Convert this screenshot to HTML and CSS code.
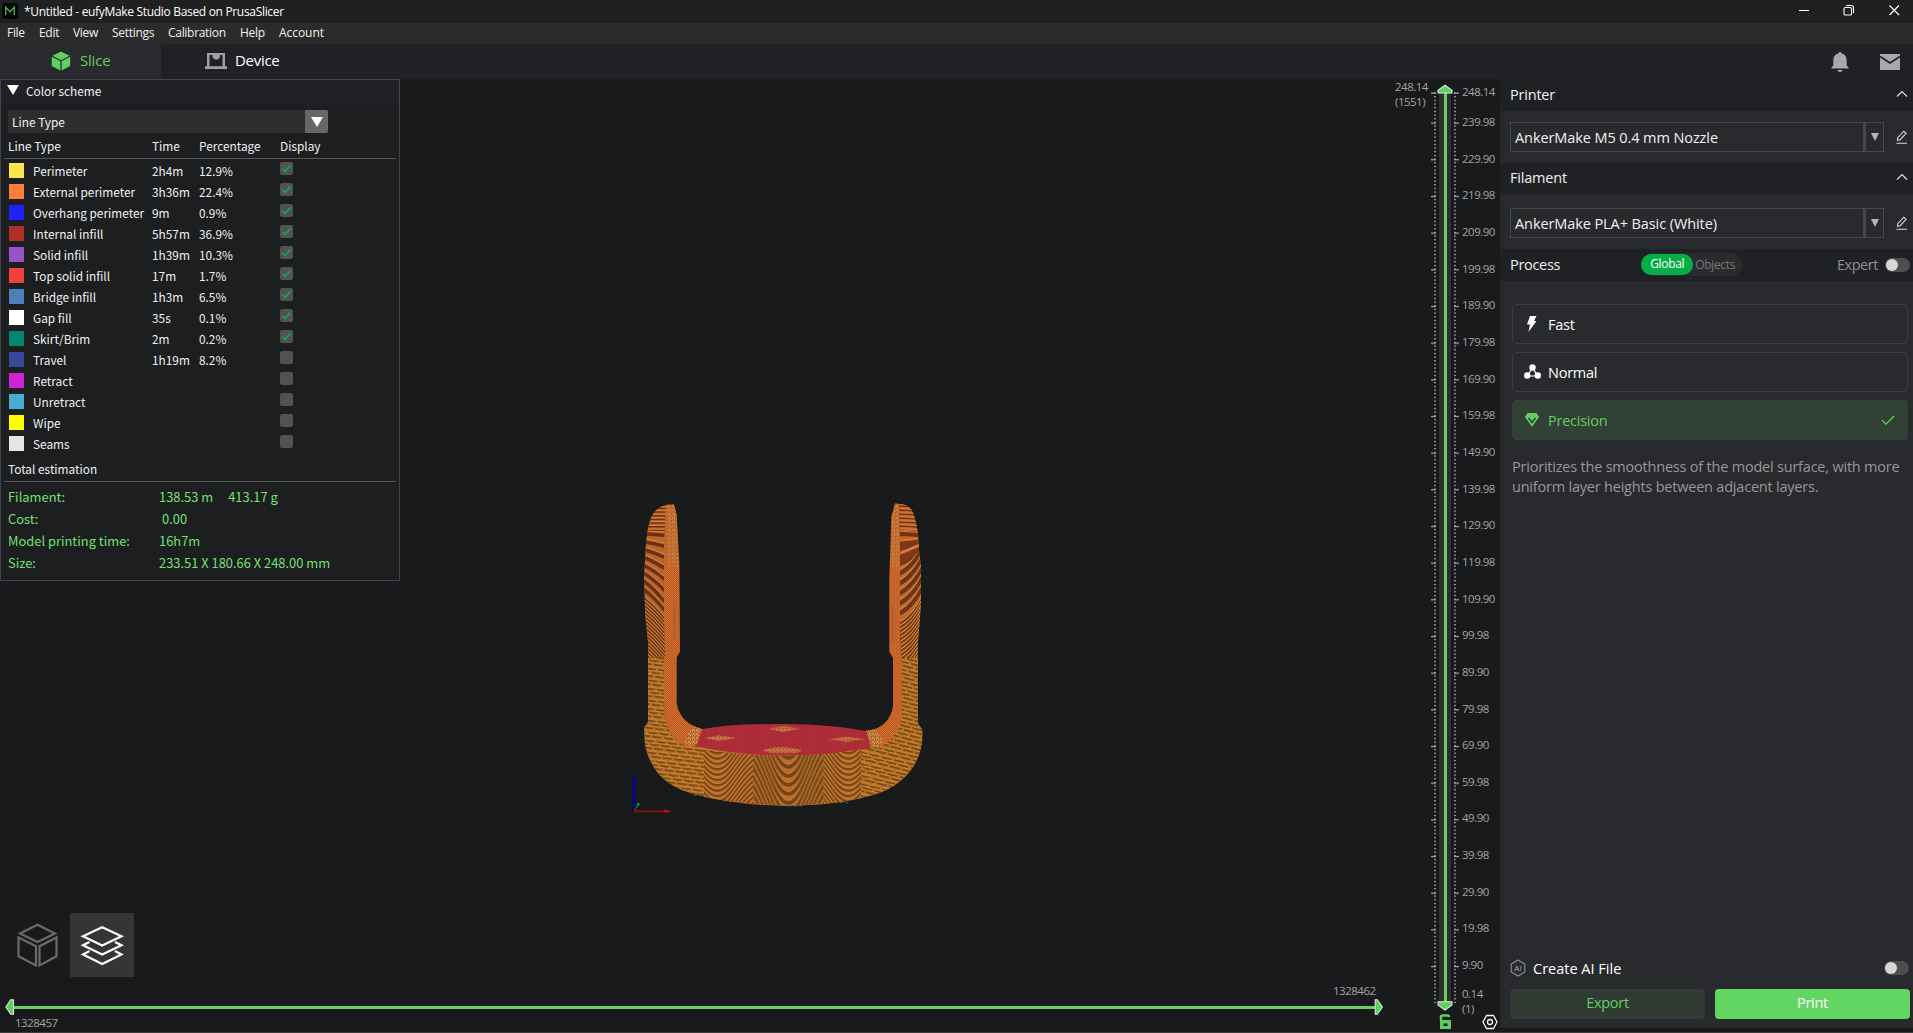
FILE: index.html
```html
<!DOCTYPE html>
<html lang="en">
<head>
<meta charset="utf-8">
<title>*Untitled - eufyMake Studio Based on PrusaSlicer</title>
<link rel="stylesheet" href="styles.css">
</head>
<body>
<header class="titlebar">
  <svg class="app-icon" width="16" height="16" viewBox="0 0 16 16"><rect width="16" height="16" rx="3" fill="#030604"/><path d="M3.700 12V4.300L8 8.700l4.300-4.400V12" fill="none" stroke="#4fb557" stroke-width="1.300"/></svg>
  <span class="title">*Untitled - eufyMake Studio Based on PrusaSlicer</span>
  <svg class="win-btns" width="114" height="23" viewBox="0 0 114 23" fill="none" stroke="#fff" stroke-width="1.100"><path d="M4 10.500h10M94.500 5.500l9.500 9.500M104 5.500l-9.500 9.500"/><rect x="49" y="7.500" width="7.500" height="7.500" rx="1.300"/><path d="M51 5.500h5.500a2 2 0 0 1 2 2V13"/></svg>
</header>
<nav class="menubar"><span class="m-file">File</span><span class="m-edit">Edit</span><span class="m-view">View</span><span class="m-set">Settings</span><span class="m-cal">Calibration</span><span class="m-help">Help</span><span>Account</span></nav>
<div class="tabbar">
  <div class="tab active">
    <svg width="20" height="20" viewBox="0 0 20 20"><path d="M10 .5 18.500 4.800 10 9.200 1.500 4.800z" fill="#62d060"/><path d="M.8 5.800 9.400 10.200V19.600L.8 15zM19.200 5.800 10.600 10.200V19.600L19.200 15z" fill="#62d060"/></svg>
    <span>Slice</span>
  </div>
  <div class="tab device">
    <svg width="22" height="18" viewBox="0 0 22 18" fill="#9d9fa1"><path d="M2 1h18v2H2z"/><path d="M2 1h2.500v14H2zM17.500 1H20v14h-2.500zM0 14.300h22V17H0zM7.500 1.500h7.500v3.700L12.700 7.500H9.800L7.500 5.200z"/></svg>
    <span>Device</span>
  </div>
  <svg class="bell" width="18" height="20" viewBox="0 0 18 20" fill="#a7a8a9"><path d="M9 0c1 0 1.500.6 1.500 1.600C14 2.300 15.700 5 15.700 8v5.500L17.500 15.500v1H.5v-1L2.300 13.500V8c0-3 1.700-5.700 5.200-6.400C7.500.6 8 0 9 0zM6.500 18h5c-.3 1.200-1.200 2-2.500 2s-2.200-.8-2.500-2z"/></svg>
  <svg class="mail" width="20" height="17" viewBox="0 0 20 17"><path d="M0 1h20v16H0z" fill="#a7a8a9"/><path d="M0 3.500 10 10l10-6.500" fill="none" stroke="#202124" stroke-width="1.800"/></svg>
</div>
<main>
  <section class="viewport">
    <svg class="model" width="320" height="340" viewBox="0 0 960 1020">
      <defs>
        <pattern id="inner" width="6" height="6" patternUnits="userSpaceOnUse"><path fill="#bb5a25" d="M0 0h6v6H0z"/><path fill="#d26e2b" d="M0 0h3v3H0zM3 3h3v3H3z"/></pattern>
        <pattern id="speck" width="12" height="12" patternUnits="userSpaceOnUse"><path fill="#bd7034" d="M0 0h12v12H0z"/><path fill="#d9ae62" d="M0 0h3v3H0zM6 3h3v3H6zM3 9h3v3H3z"/><path fill="#a8522c" d="M3 3h3v3H3zM9 6h3v3H9z"/></pattern>
        <pattern id="top" width="9" height="6" patternUnits="userSpaceOnUse"><path fill="#a92a37" d="M0 0h9v6H0z"/><path fill="#b8303b" d="M0 0h3v3H0zM6 3h3v3H6z"/></pattern>
        <clipPath id="bodyClip"><path d="M84 450V695L73 712Q70 780 95 820 125 885 220 912 350 947 500 947T760 915Q860 885 895 800 910 760 907 720L894 700V450H820V650Q805 715 740 724H248Q180 700 170 640V450z"/></clipPath>
        <clipPath id="armL"><path d="M150 42Q112 48 97 75 78 115 76 200L72 260 76 380 84 455V505H138L132 400V150L140 43z"/></clipPath>
        <clipPath id="armR"><path d="M838 41Q866 44 875 60 895 100 897 180L903 230V340L894 455V505H843L840 400V150z"/></clipPath>
        <clipPath id="midClip"><path d="M252 780 340 790Q490 804 640 790L723 778V924Q620 945 500 947 360 942 252 920z"/></clipPath>
        <clipPath id="midCore"><path d="M400 770H610V950H400z"/></clipPath>
      </defs>
      <g clip-path="url(#bodyClip)">
        <path fill="#b57227" d="M60 440H920V960H60z"/>
        <g id="wall"></g>
      </g>
      <path fill="url(#inner)" d="M132 500H168V640Q178 700 248 717L240 770H200Q140 745 134 670zM819 500H845V680Q835 745 780 770H755L740 724Q812 710 819 650z"/>
      <g clip-path="url(#armL)"><path fill="#bb642a" d="M60 30H180V520H60z"/><g id="bandsL"></g></g>
      <g clip-path="url(#armR)"><path fill="#c2662a" d="M820 30H920V520H820z"/><g id="bandsR"></g><path d="M840 160 898 150V185L840 224z" fill="#7d3a1b"/><path d="M840 190 898 166" stroke="#de7b36" stroke-width="8"/></g>
      <path fill="url(#inner)" d="M138 45 162 43 170 75 178 220 180 485 168 505 136 500 132 400V150zM826 40 838 42 840 150V480L843 505H819L808 485 808 260 814 80z"/>
      <path fill="url(#speck)" opacity=".6" d="M142 48 162 44 170 75 175 230H140zM824 42H838V230H812L816 80z"/>
      <path d="M163 335V450M819 348V455" stroke="#8d5b45" stroke-width="7" stroke-dasharray="3 3"/>
      <path fill="url(#top)" d="M248 717Q340 701 490 702T740 724L752 775Q640 799 490 797 340 795 225 768z"/>
      <path fill="url(#speck)" d="M445 716 490 708 540 716 490 726zM255 744 295 736 350 744 295 753zM627 748 680 740 735 748 680 756zM428 780Q480 762 545 780L530 790H450z" opacity=".8"/>
      <path fill="url(#speck)" d="M216 710 243 718 232 762 210 768 190 755zM738 722 765 718 790 750 775 775 755 768z"/>
      <g clip-path="url(#midClip)"><path fill="#bd6b26" d="M240 770H730V950H240z"/><g id="bandsSide"></g><g clip-path="url(#midCore)"><path fill="#b96b25" d="M385 770H625V950H385z"/><g id="bandsMid"></g></g></g>
      <path d="M222 916H262M505 948H545M660 938H690" stroke="#167b5c" stroke-width="3" stroke-dasharray="8 9"/>
      <path d="M42 857V962" stroke="#06077e" stroke-width="9"/><path d="M42 964H152" stroke="#8e0e0e" stroke-width="5"/><path d="M132 964h14" stroke="#b01010" stroke-width="8"/><path d="M44 960 55 943" stroke="#149c14" stroke-width="4" stroke-dasharray="5 3"/><circle cx="55" cy="943" r="4" fill="#18a01c"/>
    </svg>

    <aside class="legend">
      <div class="legend-head"><i class="tri"></i><span>Color scheme</span></div>
      <div class="combo"><span>Line Type</span><b><i class="tri"></i></b></div>
      <div class="row cols"><span>Line Type</span><span>Time</span><span>Percentage</span><span>Display</span></div>
      <div class="rows" id="rows"></div>
      <div class="total">Total estimation</div>
      <dl>
        <dt>Filament:</dt><dd>138.53 m<span class="grams">413.17 g</span></dd>
        <dt>Cost:</dt><dd class="cost">0.00</dd>
        <dt>Model printing time:</dt><dd>16h7m</dd>
        <dt>Size:</dt><dd>233.51 X 180.66 X 248.00 mm</dd>
      </dl>
    </aside>

    <div class="modes">
      <svg width="64" height="64" viewBox="0 0 64 64" fill="none" stroke="#6a6a6b" stroke-width="2.200"><path d="M31.500 11.800 49 20.500 31.500 29 14 20.500zM12.500 24.500 30 33.200V52.500L12.500 43.300zM50.500 24.500 33.500 33.200V52.500L50.500 43.300z"/></svg>
      <svg class="on" width="64" height="64" viewBox="0 0 64 64" fill="none" stroke="#fff" stroke-width="2.200"><path d="M32.200 14.200 51.500 23.300 32.200 32.500 13 23.300z"/><path d="M19.500 29 13 32.300 32.200 41.500 51.500 32.300 45 29M19.500 38 13 41.500 32.200 51 51.500 41.500 45 38"/></svg>
    </div>

    <div class="hslider">
      <span class="num end">1328462</span>
      <svg width="1382" height="16" viewBox="0 0 1382 16"><path d="M9 8.500H1371" stroke="#69ce67" stroke-width="3"/><path d="M9.500.8H6.800L1.800 8l5 7.200h2.700zM1371.200.8h2.200L1378.400 8l-5 7.200h-2.200z" fill="#5fce60" stroke="#d3edd1" stroke-width="1.100"/></svg>
      <span class="num start">1328457</span>
    </div>

    <div class="vslider">
      <div class="num current">248.14<br>(1551)</div>
      <svg width="32" height="950" viewBox="0 0 32 950">
        <defs><pattern id="minor" width="32" height="3.667" patternUnits="userSpaceOnUse" y="13.500"><path d="M4 0h2v1.200H4zM24 0h2v1.200h-2z" fill="#a5a5a5"/></pattern>
        <pattern id="major" width="32" height="36.670" patternUnits="userSpaceOnUse" y="43.500"><path d="M1 0h5v1.200H1zM24 0h5v1.200h-5z" fill="#a5a5a5"/></pattern></defs>
        <path fill="url(#minor)" d="M0 13H32V924H0z"/><path fill="url(#major)" d="M0 42H32V890H0z"/>
        <path fill="#a5a5a5" d="M1 13.500h5v1.200H1zM24 13.500h5v1.200h-5z"/>
        <path fill="#2e2e2e" d="M9 14H21V924H9z"/><path fill="#69ce67" d="M14 12h3V924h-3z"/>
        <path d="M8 14V11.200L15 6.200l7 5V14zM8 922.800V926l7 5 7-5v-3.200z" fill="#5fce60" stroke="#d3edd1" stroke-width="1.100"/>
        <path d="M11 942v-4q0-1.500 1.500-1.500h5q1.500 0 1.500 1.500" fill="none" stroke="#5fce60" stroke-width="2.400"/><path fill="#5fce60" d="M10 941H21V950H10z"/><path fill="#191a1b" d="M13.500 944.500h4v2.500h-4z"/>
      </svg>
      <div class="num marks" id="marks"></div>
    </div>
    <svg class="gear" width="16" height="16" viewBox="0 0 16 16" fill="none" stroke="#f2f2f2" stroke-width="1.300"><path d="M4.500 1.500h7L15 8l-3.500 6.500h-7L1 8z"/><circle cx="8" cy="8" r="2.500"/></svg>
  </section>

  <section class="side">
    <div class="head">Printer<svg class="chev" width="12" height="8" viewBox="0 0 12 8"><path d="M1 6.500 6 1.500l5 5" fill="none" stroke="#e6e6e6" stroke-width="1.100"/></svg></div>
    <div class="pick printer"><div class="select">AnkerMake M5 0.4 mm Nozzle<b></b></div><svg width="12" height="14" viewBox="0 0 12 14" fill="none" stroke="#dadada" stroke-width="1.100"><path d="M1.500 10.300 1.800 7.700 7.800 1.200 10 3.300 4.200 9.700zM.5 13.200h10.500"/></svg></div>
    <div class="head">Filament<svg class="chev" width="12" height="8" viewBox="0 0 12 8"><path d="M1 6.500 6 1.500l5 5" fill="none" stroke="#e6e6e6" stroke-width="1.100"/></svg></div>
    <div class="pick filament"><div class="select">AnkerMake PLA+ Basic (White)<b></b></div><svg width="12" height="14" viewBox="0 0 12 14" fill="none" stroke="#dadada" stroke-width="1.100"><path d="M1.500 10.300 1.800 7.700 7.800 1.200 10 3.300 4.200 9.700zM.5 13.200h10.500"/></svg></div>
    <div class="head process">Process<div class="scope"><b>Global</b><span>Objects</span></div><span class="expert">Expert</span><i class="toggle"></i></div>
    <div class="presets">
      <div class="preset"><svg width="18" height="18" viewBox="0 0 18 18"><path d="M7 1h6.500L11 6h2.500L5.500 17 7 9.500H4z" fill="#fff"/></svg>Fast</div>
      <div class="preset"><svg width="18" height="18" viewBox="0 0 18 18"><path d="M9.500 4.500 4.500 13h10z" fill="none" stroke="#fff" stroke-width="1.200"/><g fill="#fff"><circle cx="9.500" cy="4.500" r="3.200"/><circle cx="4.200" cy="12.500" r="3.200"/><circle cx="14.800" cy="12.500" r="3.200"/></g></svg>Normal</div>
      <div class="preset chosen"><svg width="18" height="18" viewBox="0 0 18 18"><path d="M4.500 2h9L16 6 9 15.800 2 6z" fill="#62d060"/><path d="M5.500 7 9 11.500 12.500 7" fill="none" stroke="#324135" stroke-width="1.500"/></svg>Precision<svg class="tick" width="14" height="11" viewBox="0 0 14 11"><path d="M1 5.200 5 9.200 13 1" fill="none" stroke="#62d060" stroke-width="1.300"/></svg></div>
    </div>
    <p class="desc">Prioritizes the smoothness of the model surface, with more<br>uniform layer heights between adjacent layers.</p>
    <div class="ai"><svg width="16" height="18" viewBox="0 0 16 18"><path d="M8 1 14.800 5v8L8 17 1.200 13V5z" fill="none" stroke="#8e8f91" stroke-width="1.100"/><text x="8" y="12" text-anchor="middle" class="ai-text">AI</text></svg>Create AI File<i class="toggle"></i></div>
    <div class="actions"><button class="export">Export</button><button class="print">Print</button></div>
  </section>
</main>
<footer></footer>
<script src="scene.js"></script>
</body>
</html>
```
FILE: styles.css
```css
*{box-sizing:border-box}
body{margin:0;width:1913px;height:1033px;overflow:hidden;display:flex;flex-direction:column;background:#191a1b;color:#f0f0f0;font-family:"Open Sans","Noto Sans",sans-serif;font-size:14.5px;letter-spacing:-.2px}
svg{display:block;flex:none}
i{font-style:normal}
.titlebar{height:23px;background:#202020;display:flex;align-items:center;padding-left:2px;font-size:12px;letter-spacing:-.32px;color:#fff}
.app-icon{margin-top:-1px}
.title{margin-left:6px}
.win-btns{margin-left:auto;margin-right:4px}
.menubar{height:20px;background:#2b2b2b;display:flex;align-items:center;padding:0 0 1px 7px;font-size:12px;letter-spacing:-.3px}
.menubar span{white-space:nowrap}
.menubar span:last-child{letter-spacing:-.05px}
.m-file{width:32px}.m-edit{width:34px}.m-view{width:39px}.m-set{width:56px}.m-cal{width:72px}.m-help{width:39px}
.tabbar{height:36px;background:#202124;display:flex;align-items:center;border-top:1px solid #25262a}
.tab{display:flex;align-items:center;height:35px;width:161px;font-size:15px;padding:0 0 2px 51px;gap:9px}
.tab span{margin-top:-2px}
.tab.active{background:#292a2d;color:#62d060}
.tab.device{padding-left:44px;gap:8px;color:#fff;letter-spacing:-.28px}
.bell{margin-left:auto}
.mail{margin:0 13px 0 31px}
main{display:flex;height:949px}
.viewport{width:1500px;position:relative;background:#191a1b}
.model{position:absolute;left:620px;top:411px}
.legend{position:absolute;left:0;top:0;width:400px;height:502px;border:1px solid #41444d;background:#1d1e20;font-family:"Noto Sans CJK SC",sans-serif;font-size:11.85px;letter-spacing:0;line-height:21px;padding:0 3px}
.legend-head{height:24px;margin:0 -3px;background:#202125;display:flex;align-items:center;padding:0 0 3px 6px;gap:7px}
.tri{width:0;height:0;border:6px solid transparent;border-top:10px solid #fff;border-bottom:0;margin-top:-1px}
.combo{margin:6px 0 0 4px;width:320px;height:23px;background:#2e2e2e;display:flex;padding-left:4px;line-height:24px;border-radius:1px}
.combo b{margin-left:auto;width:23px;background:#676767;display:grid;place-items:center;border-radius:0 2px 2px 0}
.combo .tri{margin:0}
.row{display:grid;grid-template-columns:25px 119px 47px 81px 1fr;height:21px;padding-left:4px}
.cols{grid-template-columns:144px 47px 81px 1fr;height:26px;line-height:25px;border-bottom:1px solid #56575a}
.rows{padding-top:1px}
.row i{width:15px;height:15px;margin:3px 0 0 1px}
.row u{width:13px;height:13px;background:#525252;border-radius:2px;margin-top:2px}
.rows span{white-space:nowrap}
.total{height:31px;line-height:36px;padding-left:4px;border-bottom:1px solid #56575a;margin-top:-3px}
dl{margin:4px 0 0 4px;display:grid;grid-template-columns:151px 1fr;font-size:12.9px;line-height:22px;color:#73e072}
dd{margin:0}.cost{padding-left:3px}.grams{margin-left:15px}
.modes{position:absolute;left:6px;top:834px;display:flex}
.modes .on{background:#353536}
.num{font-size:11.5px;letter-spacing:-.5px;color:#a3a3a3;line-height:15px}
.hslider{position:absolute;left:4px;top:904px;width:1382px}
.hslider .num{display:block;height:16px}
.hslider .end{margin-left:1329px}
.start{margin:0 0 0 11px}
.vslider{position:absolute;right:0;top:0;width:105px;display:flex}
.current{width:35px;white-space:nowrap}
.marks{padding:5px 0 0;white-space:nowrap}
.marks span{display:block;height:36.670px}
.marks span:first-child{height:30px}
.marks .last{height:15px;margin-top:-8px}
.gear{position:absolute;left:1482px;top:935px}
.side{width:413px;background:#292a2d;display:flex;flex-direction:column}
.head{height:32px;background:#202124;display:flex;align-items:center;padding:0 5px 2px 10px}
.chev{margin-left:auto}
.pick{display:flex;align-items:center;padding-left:10px;gap:12px}
.printer{height:51px;padding-top:1px}.filament{height:55px;padding-top:3px}
.select{width:374px;height:30px;border:1px solid #47484a;display:flex;align-items:center;padding-left:4px;letter-spacing:-.09px;white-space:nowrap}
.select b{margin-left:auto;width:20px;height:28px;border-left:3px solid #47484a;display:grid;place-items:center}
.select b:before{content:"";border:4px solid transparent;border-top:8px solid #b5b5b5;border-bottom:0}
.process{padding:0 3px 1px 10px;letter-spacing:-.3px}
.scope{margin-left:81px;display:flex;align-items:center;height:23px;background:#2b2b2e;border-radius:12px;width:101px;font-size:12px;letter-spacing:-.33px;color:#77787b}
.scope b{font-weight:400;color:#fff;background:#06ad46;width:52px;height:21px;line-height:20px;border-radius:11px;text-align:center;margin-right:2px}
.expert{margin-left:auto;margin-right:7px;color:#8f9092;letter-spacing:-.45px}
.toggle{width:25px;height:14px;border-radius:7px;background:#4e4e50;display:block}
.toggle:before{content:"";display:block;width:12px;height:12px;border-radius:50%;background:#d8d8d8;margin:1px 0 0 1px}
.presets{display:flex;flex-direction:column;gap:8px;padding:23px 5px 0 12px}
.preset{height:40px;border:1px solid #3c3d40;border-radius:4px;display:flex;align-items:center;padding:0 12px 0 10px;gap:7px;color:#fff;letter-spacing:-.25px}
.chosen{background:#324135;border-color:#324135;color:#62d060}
.tick{margin-left:auto}
.desc{margin:17px 0 0 12px;line-height:20px;color:#97989b;white-space:nowrap;letter-spacing:-.21px}
.ai{margin-top:auto;height:28px;display:flex;align-items:center;padding:0 4px 0 10px;gap:7px;letter-spacing:0;color:#fff}
.ai .toggle{margin-left:auto}
.ai-text{font:8px "Open Sans",sans-serif;fill:#aaa}
.actions{display:flex;gap:10px;padding:7px 3px 9px 10px}
.actions button{flex:1;height:30px;border:0;border-radius:4px;font:14.5px/28px "Open Sans",sans-serif;padding:0 0 2px;letter-spacing:-.3px}
.export{background:#303932;color:#62d060}
.print{background:#62d662;color:#fff}
footer{height:5px;background:#191a1b;border-bottom:1px solid #3c3c3d}
```
FILE: scene.js
```js
// Legend rows: colour, name, time, share, shown
const lines = [
  ['#ffe54d', 'Perimeter', '2h4m', '12.9%', 1],
  ['#ff7d38', 'External perimeter', '3h36m', '22.4%', 1],
  ['#1f1fff', 'Overhang perimeter', '9m', '0.9%', 1],
  ['#b03029', 'Internal infill', '5h57m', '36.9%', 1],
  ['#9654cc', 'Solid infill', '1h39m', '10.3%', 1],
  ['#f04040', 'Top solid infill', '17m', '1.7%', 1],
  ['#4d80ba', 'Bridge infill', '1h3m', '6.5%', 1],
  ['#ffffff', 'Gap fill', '35s', '0.1%', 1],
  ['#00876e', 'Skirt/Brim', '2m', '0.2%', 1],
  ['#38489b', 'Travel', '1h19m', '8.2%', 0],
  ['#cd22d6', 'Retract', '', '', 0],
  ['#49adcf', 'Unretract', '', '', 0],
  ['#ffff00', 'Wipe', '', '', 0],
  ['#e6e6e6', 'Seams', '', '', 0]
];
const check = '<svg width="13" height="13" viewBox="0 0 13 13"><path d="M2.500 6.800 5.200 9.300 10.500 3.500" fill="none" stroke="#12a850" stroke-width="1.700"/></svg>';
document.getElementById('rows').innerHTML = lines.map(([c, n, t, p, on]) =>
  `<div class="row"><i style="background:${c}"></i><span>${n}</span><span>${t}</span><span>${p}</span><u>${on ? check : ''}</u></div>`).join('');

// Layer heights beside the vertical slider
const heights = ['248.14'];
for (let i = 0; i < 24; i++) heights.push((240 - i * 10 - (i % 2 ? 0.1 : 0.02)).toFixed(2));
document.getElementById('marks').innerHTML = heights.map(h => `<span>${h}</span>`).join('') + '<span class="last">0.14<br>(1)</span>';

// Layer banding on the sliced model
const put = (id, s) => { document.getElementById(id).innerHTML = s; };
const band = (d, c, w, dash) => `<path d="${d}" fill="none" stroke="${c}" stroke-width="${w}"${dash ? ` stroke-dasharray="${dash}"` : ''}/>`;

let wall = '';
for (let y = 400, n = 0; y < 980; y += 12, n++) {
  const x = 40 + (n * 13) % 34;
  wall += band(`M${x} ${y}L400 ${y + 40}`, '#7d4a1e', 5, '27 7') + band(`M${x + 6} ${y - 6}L400 ${y + 34}`, '#cd8c31', 2.5, '24 10');
  wall += band(`M${560 + x} ${y - 50}L920 ${y + 25}`, '#7a481d', 5, '31 7') + band(`M${564 + x} ${y - 56}L920 ${y + 19}`, '#cf8b31', 2.5, '28 10');
}
put('wall', wall);

let left = '';
for (let y = 44; y < 520;) {
  const step = y > 125 && y < 320 ? 25 : 11;
  const k = Math.max(0, Math.min(58, (y - 120) * 0.35));
  const f = o => `M68 ${y + o - k * 0.2}Q100 ${y + o + k * 0.2} 138 ${y + o + k}`;
  left += band(f(0), '#6b3018', step * 0.42) + band(f(-step * 0.38), y > 260 ? '#bb8c33' : '#d98336', 3);
  y += step;
}
put('bandsL', left);

let right = '';
for (let y = 48; y < 580;) {
  const step = y > 120 && y < 400 ? 30 : 12;
  const k = y < 150 ? 5 : Math.max(-85, (150 - y) * 0.8);
  const f = o => `M836 ${y + o}Q880 ${y + o + k * 0.25} 908 ${y + o + k}`;
  right += band(f(0), '#6e3319', step * 0.42) + band(f(-step * 0.38), y > 220 ? '#c99536' : '#de7d36', 3);
  y += step;
}
put('bandsR', right);

const arcs = (cx, w, rise, step, start) => {
  let s = '';
  for (let y = start; y < 1250; y += step) {
    const f = o => `M${cx - w} ${y - rise + o}C${cx - w * 0.5} ${y - rise * 0.6 + o} ${cx - w * 0.35} ${y + o} ${cx} ${y + o}S${cx + w * 0.5} ${y - rise * 0.6 + o} ${cx + w} ${y - rise + o}`;
    s += band(f(0), '#76441c', step * 0.4) + band(f(-step * 0.35), '#b98f33', 2) + band(f(step * 0.36), '#d57529', 2);
  }
  return s;
};
put('bandsSide', arcs(292, 110, 110, 16, 790) + arcs(685, 110, 110, 16, 790));
put('bandsMid', arcs(505, 120, 210, 27, 804));
```
